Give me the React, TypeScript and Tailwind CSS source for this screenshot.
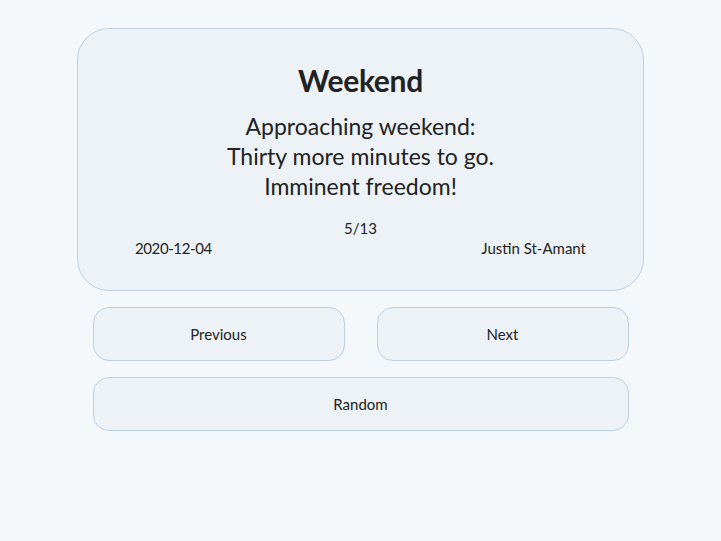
import React from "react";

export default function App() {
  return (
    <div
      className="min-h-[541px] w-full bg-[#f5f8fb] text-[#222222]"
      style={{ fontFamily: "Lato, 'Noto Sans', sans-serif" }}
    >
      <div className="mx-auto flex w-[567px] flex-col items-center pt-[28px]">
        <div className="flex h-[263px] w-[567px] flex-col items-center rounded-[32px] border border-[#bdd0e3] bg-[#edf2f7] pt-[31px]">
          <h1 className="text-[30px] font-bold leading-[40px] tracking-[-0.3px]">Weekend</h1>
          <div className="mt-[11px] text-center text-[23px] leading-[30px]">
            <div>Approaching weekend:</div>
            <div>Thirty more minutes to go.</div>
            <div>Imminent freedom!</div>
          </div>
          <div className="mt-[17px] text-[15px] leading-[20px]">5/13</div>
          <div className="flex w-full justify-between pl-[57px] pr-[57px] text-[15px] leading-[20px]">
            <span className="tracking-[-0.4px]">2020-12-04</span>
            <span>Justin St-Amant</span>
          </div>
        </div>
        <div className="mt-[16px] flex w-[536px] flex-col gap-[16px]">
          <div className="flex gap-[32px]">
            <button className="h-[54px] flex-1 rounded-[16px] border border-[#bdd0e3] bg-[#edf2f7] text-[15px]">
              Previous
            </button>
            <button className="h-[54px] flex-1 rounded-[16px] border border-[#bdd0e3] bg-[#edf2f7] text-[15px]">
              Next
            </button>
          </div>
          <button className="h-[54px] w-full rounded-[16px] border border-[#bdd0e3] bg-[#edf2f7] text-[15px]">
            Random
          </button>
        </div>
      </div>
    </div>
  );
}
